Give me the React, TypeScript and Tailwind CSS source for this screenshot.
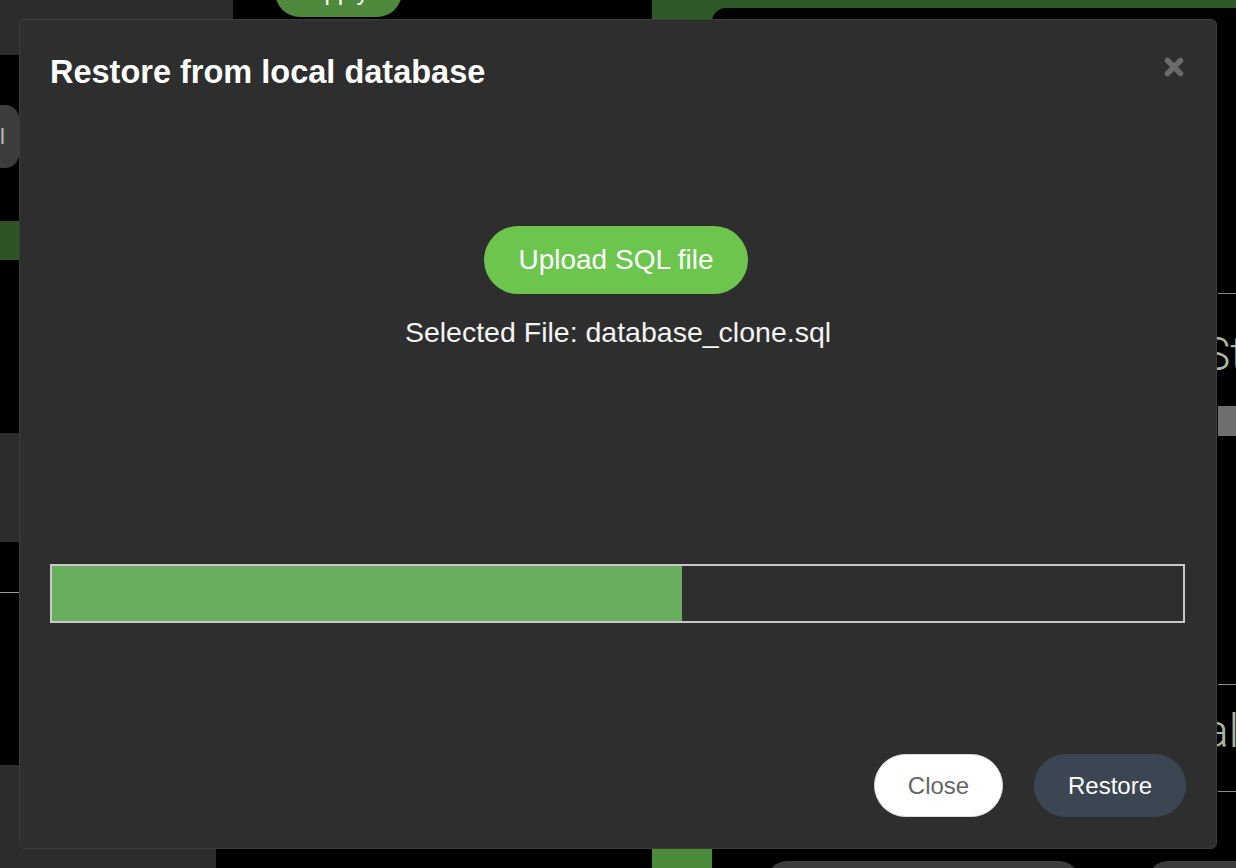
import React from "react";

const PROGRESS = 55.7;

function CloseIcon() {
  return (
    <svg width="22" height="22" viewBox="0 0 22 22" aria-hidden="true">
      <path
        d="M4.5 4.5 L17.5 17.5 M17.5 4.5 L4.5 17.5"
        stroke="#6a6a6a"
        strokeWidth={5.5}
        strokeLinecap="round"
      />
    </svg>
  );
}

function BackgroundPage() {
  return (
    <div className="flex h-full">
      {/* Left sidebar */}
      <aside className="w-[233px] shrink-0 flex flex-col">
        <div className="h-[55px] bg-[#2c2c2c]" />
        <div className="h-[50px]" />
        <div className="h-[63px] w-[19px] rounded-r-[14px] bg-[#3d3d3d] flex items-center overflow-hidden text-[22px] text-[#bdbdbd] leading-none">
          l
        </div>
        <div className="h-[53px]" />
        <div className="h-[39px] bg-[#2e5426]" />
        <div className="h-[173px]" />
        <div className="h-[109px] bg-[#2c2c2c]" />
        <div className="h-[50px]" />
        <div className="h-px bg-[#9a9a9a]" />
        <div className="h-[172px]" />
        <div className="flex-1 w-[216px] bg-[#2c2c2c]" />
      </aside>

      {/* Middle column */}
      <section className="w-[419px] shrink-0">
        <div className="ml-[42px] -mt-[33px] h-[50px] w-[127px] rounded-full bg-[#4f8a3c] flex items-center justify-center text-white text-[24px]">
          Apply
        </div>
      </section>

      {/* Right area */}
      <section className="flex-1 min-w-0 flex flex-col bg-[#2d5a27]">
        <div className="h-[8px]" />
        <div className="flex flex-1 min-w-0">
          <div className="w-[60px] shrink-0 flex flex-col">
            <div className="flex-1" />
            <div className="h-[19px] bg-[#4a8c3c]" />
          </div>
          <div className="flex-1 min-w-0 flex flex-col bg-black rounded-tl-[14px]">
            <div className="flex flex-1">
              <div className="flex-1" />
              <div className="w-[18px] shrink-0 flex flex-col whitespace-nowrap font-['Roboto',sans-serif] font-light text-[46px] leading-none text-[#a7b7a3]">
                <div className="h-[285px] shrink-0" />
                <div className="h-px shrink-0 bg-[#8a8a8a]" />
                <div className="h-[112px] shrink-0 pt-[37px] -ml-[15px]">Status</div>
                <div className="h-[30px] shrink-0 bg-[#6e6e6e]" />
                <div className="h-[248px] shrink-0" />
                <div className="h-px shrink-0 bg-[#8a8a8a]" />
                <div className="h-[106px] shrink-0 pt-[23px] -ml-[14px]">al</div>
                <div className="h-px shrink-0 bg-[#8a8a8a]" />
                <div className="flex-1" />
              </div>
            </div>
            <div className="h-[7px] flex gap-[69px] pl-[55px] overflow-hidden">
              <div className="w-[312px] shrink-0 h-[30px] rounded-t-[20px] bg-[#3d3d3d]" />
              <div className="w-[200px] shrink-0 h-[30px] rounded-t-[20px] bg-[#3d3d3d]" />
            </div>
          </div>
        </div>
      </section>
    </div>
  );
}

export default function App() {
  return (
    <div className="relative w-[1236px] h-[868px] overflow-hidden bg-black font-['Liberation_Sans',Arial,Helvetica,sans-serif]">
      <BackgroundPage />

      {/* Modal */}
      <div className="absolute inset-0 p-[19px] flex">
        <div className="flex-1 flex flex-col rounded-[6px] border border-[#3d3d3d] bg-[#2e2e2e] px-[30px] pt-[33px] pb-[31px]">
          {/* Header */}
          <div className="flex items-start justify-between">
            <h2 className="text-[32.5px] leading-[38px] font-bold text-white">
              Restore from local database
            </h2>
            <button className="mt-[3px] mr-[1px]" aria-label="Close">
              <CloseIcon />
            </button>
          </div>

          {/* Upload */}
          <div className="mt-[135px] flex flex-col items-center">
            <button className="h-[68px] w-[264px] rounded-full bg-[#6cc64e] text-white text-[28px] mr-[4px]">
              Upload SQL file
            </button>
            <p className="mt-[21px] text-[28.5px] leading-[34px] text-[#f4f4f4]">
              Selected File: database_clone.sql
            </p>
          </div>

          {/* Progress */}
          <div className="mt-[215px] h-[59px] border-2 border-[#c8c8c8] mr-[1px]">
            <div className="h-full bg-[#69ae5e]" style={{ width: `${PROGRESS}%` }} />
          </div>

          {/* Footer */}
          <div className="mt-auto flex justify-end gap-[31px]">
            <button className="h-[63px] w-[129px] rounded-full bg-white border border-[#dcdcdc] text-[24px] text-[#666666]">
              Close
            </button>
            <button className="h-[63px] w-[152px] rounded-full bg-[#3b4652] text-[24px] text-white">
              Restore
            </button>
          </div>
        </div>
      </div>
    </div>
  );
}
